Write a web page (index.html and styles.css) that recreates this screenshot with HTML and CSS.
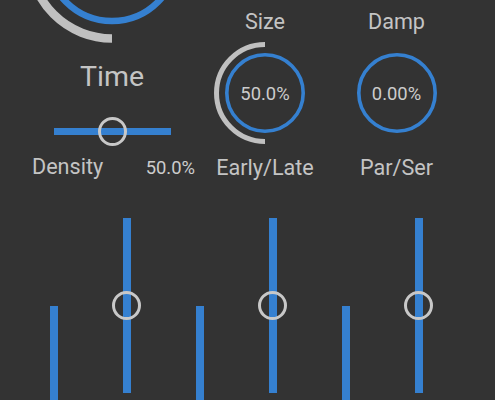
FILE: index.html
```html
<!DOCTYPE html>
<html>
<head>
  <meta charset="utf-8" />
  <title>Reverb</title>
  <link rel="stylesheet" href="styles.css">
</head>
<body>
  <div id="panel">
    <div class="col col-main">
      <svg class="dial-big" width="180" height="180" viewBox="0 0 180 180">
        <path d="M90 172.5 A82.5 82.5 0 0 1 90 7.5" fill="none" stroke="#c0c0c0" stroke-width="8.5" />
        <circle cx="90" cy="90" r="65" fill="none" stroke="#3580d0" stroke-width="6.5" />
      </svg>
      <div class="title">Time</div>
      <div class="hslider"><div class="track"></div></div>
      <div class="readout">
        <span class="label">Density</span>
        <span class="value">50.0%</span>
      </div>
    </div>

    <div class="col">
      <div class="label">Size</div>
      <div class="knob">
        <svg width="104" height="104" viewBox="0 0 104 104">
          <path d="M52 100.5 A48.5 48.5 0 0 1 52 3.5" fill="none" stroke="#c0c0c0" stroke-width="5" />
          <circle cx="52" cy="52" r="38.2" fill="none" stroke="#3580d0" stroke-width="3.6" />
        </svg>
        <span class="value">50.0%</span>
      </div>
      <div class="label below">Early/Late</div>
    </div>

    <div class="col">
      <div class="label">Damp</div>
      <div class="knob">
        <svg width="104" height="104" viewBox="0 0 104 104">
          <circle cx="52" cy="52" r="38.2" fill="none" stroke="#3580d0" stroke-width="3.6" />
        </svg>
        <span class="value">0.00%</span>
      </div>
      <div class="label below">Par/Ser</div>
    </div>
  </div>

  <div id="faders">
    <div class="fader low"></div>
    <div class="fader"></div>
    <div class="fader low"></div>
    <div class="fader"></div>
    <div class="fader low"></div>
    <div class="fader"></div>
  </div>
</body>
</html>
```

FILE: styles.css
```css
body {
  margin: 0;
  height: 400px;
  overflow: hidden;
  background: #333333;
  color: #c4c4c4;
  font-family: Roboto, 'Liberation Sans', sans-serif;
}
#panel {
  display: grid;
  grid-template-columns: 200px 106px 157px;
  padding-left: 12px;
  height: 180px;
}
.col {
  display: flex;
  flex-direction: column;
  align-items: center;
}
.label {
  font-size: 21.6px;
  line-height: 24px;
  margin-top: 10px;
}
.label.below {
  margin-top: 11px;
}
.knob {
  display: grid;
  place-items: center;
  margin-top: 7px;
}
.knob svg,
.knob .value {
  grid-area: 1 / 1;
}
.knob svg {
  display: block;
}
.value {
  font-size: 18.4px;
  color: #cccccc;
}
.knob .value {
  margin-top: 1px;
}
.dial-big {
  display: block;
  margin-top: -134px;
}
.title {
  font-size: 28.5px;
  line-height: 32px;
  margin-top: 15px;
}
.hslider {
  position: relative;
  width: 117px;
  height: 28px;
  margin-top: 24px;
  display: flex;
  align-items: center;
}
.hslider .track {
  width: 100%;
  height: 7px;
  margin-top: 1px;
  background: #3580d0;
}
.hslider::after {
  content: "";
  position: absolute;
  left: 44px;
  top: 0;
  width: 23px;
  height: 23px;
  border: 3px solid #c8c8c8;
  border-radius: 50%;
}
.readout {
  align-self: stretch;
  display: flex;
  justify-content: space-between;
  align-items: baseline;
  padding: 0 17px 0 20px;
  margin-top: 10px;
}
.readout .label {
  margin-top: 0;
}
#faders {
  display: grid;
  grid-template-columns: repeat(6, 73px);
  align-items: start;
  height: 182px;
  overflow: hidden;
  padding-left: 18px;
  margin-top: 38px;
}
.fader {
  position: relative;
  width: 8px;
  height: 175px;
  margin-left: 32px;
  background: #3580d0;
}
.fader::after {
  content: "";
  position: absolute;
  left: -11px;
  top: 73px;
  width: 23px;
  height: 23px;
  border: 3px solid #c8c8c8;
  border-radius: 50%;
}
.fader.low {
  margin-top: 88px;
}
.fader.low::after {
  display: none;
}
```
